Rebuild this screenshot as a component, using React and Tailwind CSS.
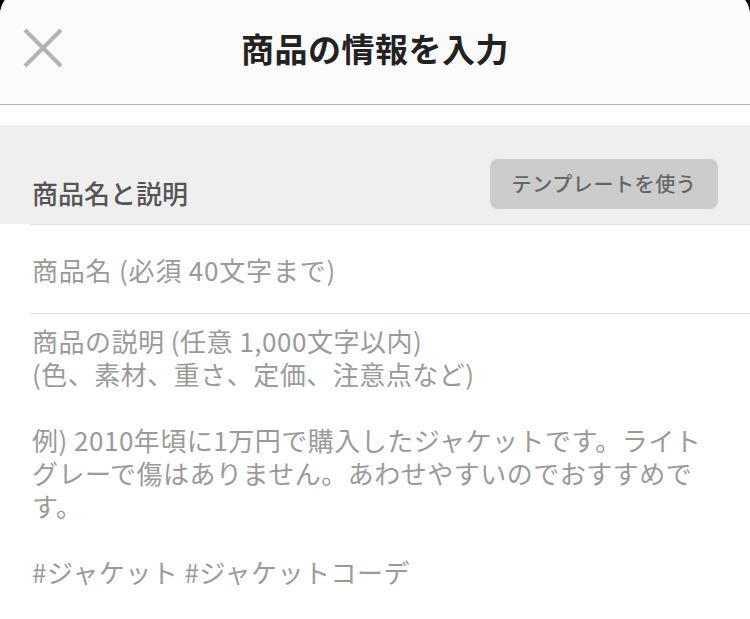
import React from 'react';

const descLines = [
  '商品の説明 (任意 1,000文字以内)',
  '(色、素材、重さ、定価、注意点など)',
  '',
  '例) 2010年頃に1万円で購入したジャケットです。ライト',
  'グレーで傷はありません。あわせやすいのでおすすめで',
  'す。',
  '',
  '#ジャケット #ジャケットコーデ',
];

function CloseIcon() {
  return (
    <svg width="40" height="40" viewBox="0 0 40 40" fill="none">
      <path d="M2 2 L38 38 M38 2 L2 38" stroke="#b2b2b2" strokeWidth="4" />
    </svg>
  );
}

export default function App() {
  return (
    <div className="min-h-[619px] bg-black overflow-hidden font-['Noto_Sans_CJK_JP','Noto_Sans',sans-serif]">
      <div className="-mt-[10px] min-h-[629px] rounded-t-[25px] overflow-hidden bg-white">
        {/* Header */}
        <div className="h-[115px] pt-[10px] pb-[8px] grid grid-cols-[1fr_auto_1fr] items-center bg-[#fbfbfb] border-b border-[#b3b3b3]">
          <div className="pl-[23px]">
            <CloseIcon />
          </div>
          <h1 className="text-[33px] tracking-[0.5px] font-bold text-[#222] leading-none">商品の情報を入力</h1>
          <div />
        </div>

        <div className="h-[20px]" />

        {/* Section header */}
        <div className="h-[99px] bg-[#efefef] px-[32px] pt-[34px] flex items-start justify-between">
          <h2 className="pt-[18px] text-[26px] leading-[32px] font-medium text-[#555]">商品名と説明</h2>
          <button className="w-[228px] h-[50px] rounded-[8px] bg-[#cccccc] text-[20px] tracking-[0.6px] font-medium text-[#666]">
            テンプレートを使う
          </button>
        </div>

        <div className="ml-[30px] border-t border-[#e2e2e2]" />

        {/* Name */}
        <div className="h-[88px] px-[32px] flex items-center text-[26px] tracking-[0.8px] text-[#9a9a9a]">
          商品名 (必須 40文字まで)
        </div>

        <div className="ml-[30px] border-t border-[#e2e2e2]" />

        {/* Description */}
        <div className="px-[32px] pt-[10px] text-[26px] tracking-[0.5px] leading-[33px] text-[#9a9a9a] whitespace-nowrap">
          {descLines.map((line, i) => (
            <div key={i} className="h-[33px]">{line}</div>
          ))}
        </div>
      </div>
    </div>
  );
}
